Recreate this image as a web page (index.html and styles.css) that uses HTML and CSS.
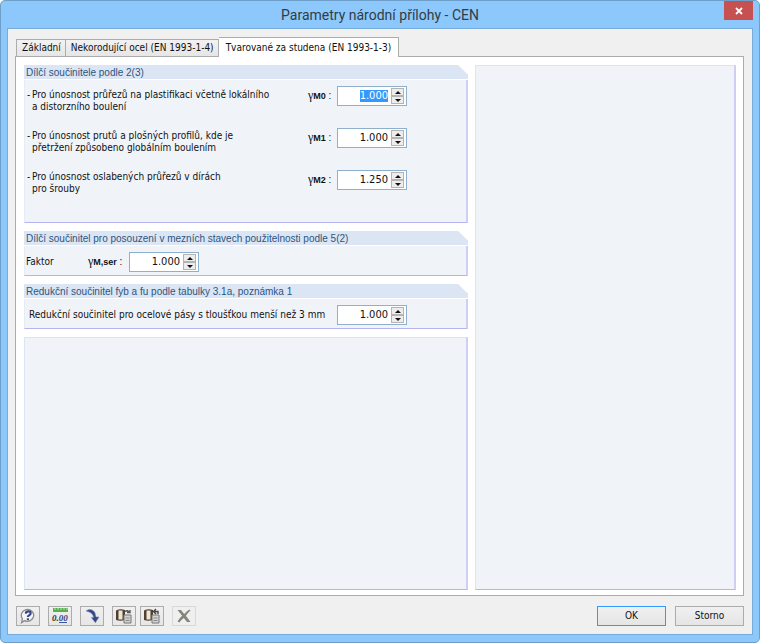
FILE: index.html
```html
<!DOCTYPE html>
<html lang="cs">
<head>
<meta charset="utf-8">
<title>Parametry národní přílohy - CEN</title>
<link rel="stylesheet" href="styles.css">
</head>
<body>
<main class="window">
  <header class="titlebar">
    <h1 class="title">Parametry národní přílohy - CEN</h1>
    <button class="close" type="button" aria-label="Zavřít">
      <svg width="8" height="8" viewBox="0 0 8 8"><path d="M1 1l6 6M7 1l-6 6" stroke="#fff" stroke-width="1.8"/></svg>
    </button>
  </header>
  <form class="client">
    <div class="tabs" role="tablist">
      <button class="tab" type="button" role="tab">Základní</button>
      <button class="tab" type="button" role="tab">Nekorodující ocel (EN 1993-1-4)</button>
      <button class="tab tab-active" type="button" role="tab" aria-selected="true">Tvarované za studena (EN 1993-1-3)</button>
    </div>
    <div class="page" role="tabpanel">
      <div class="column">
        <section class="group group-tall">
          <h2 class="group-title">Dílčí součinitele podle 2(3)</h2>
          <div class="factors">
            <div class="notes">
              <p class="note">Pro únosnost průřezů na plastifikaci včetně lokálního<br>a distorzního boulení</p>
              <p class="note">Pro únosnost prutů a plošných profilů, kde je<br>přetržení způsobeno globálním boulením</p>
              <p class="note">Pro únosnost oslabených průřezů v dírách<br>pro šrouby</p>
            </div>
            <div class="fields">
              <div class="field"><label class="symbol" for="m0"><span class="gamma">γ</span><b>M0</b> :</label>
                <span class="spin"><input id="m0" type="text" value="1.000"><span class="arrows"><button type="button" class="arrow up" aria-label="Zvýšit"></button><button type="button" class="arrow down" aria-label="Snížit"></button></span></span></div>
              <div class="field"><label class="symbol" for="m1"><span class="gamma">γ</span><b>M1</b> :</label>
                <span class="spin"><input id="m1" type="text" value="1.000"><span class="arrows"><button type="button" class="arrow up" aria-label="Zvýšit"></button><button type="button" class="arrow down" aria-label="Snížit"></button></span></span></div>
              <div class="field"><label class="symbol" for="m2"><span class="gamma">γ</span><b>M2</b> :</label>
                <span class="spin"><input id="m2" type="text" value="1.250"><span class="arrows"><button type="button" class="arrow up" aria-label="Zvýšit"></button><button type="button" class="arrow down" aria-label="Snížit"></button></span></span></div>
            </div>
          </div>
        </section>
        <section class="group">
          <h2 class="group-title">Dílčí součinitel pro posouzení v mezních stavech použitelnosti podle 5(2)</h2>
          <div class="line">
            <span class="factor-name">Faktor</span>
            <label class="symbol symbol-ser" for="mser"><span class="gamma">γ</span><b>M,ser</b> :</label>
            <span class="spin"><input id="mser" type="text" value="1.000"><span class="arrows"><button type="button" class="arrow up" aria-label="Zvýšit"></button><button type="button" class="arrow down" aria-label="Snížit"></button></span></span>
          </div>
        </section>
        <section class="group">
          <h2 class="group-title">Redukční součinitel fyb a fu podle tabulky 3.1a, poznámka 1</h2>
          <div class="line">
            <label class="reduction" for="red">Redukční součinitel pro ocelové pásy s tloušťkou menší než 3 mm</label>
            <span class="spin"><input id="red" type="text" value="1.000"><span class="arrows"><button type="button" class="arrow up" aria-label="Zvýšit"></button><button type="button" class="arrow down" aria-label="Snížit"></button></span></span>
          </div>
        </section>
        <section class="blank"></section>
      </div>
      <aside class="blank side"></aside>
    </div>
    <footer class="footer">
      <div class="tools">
        <button class="tool" type="button" aria-label="Nápověda">
          <svg width="18" height="16" viewBox="0 0 18 16"><path d="M5.5 12.6L2.6 14.6 3.4 10.8A6.2 5.9 0 1 1 5.5 12.6Z" fill="#f4f5fa" stroke="#8b8b8b" stroke-width="1.3"/><path d="M6.8 5.7Q7 3.4 9.4 3.4T11.6 5.4Q11.6 6.5 10 7.4Q9 8 8.9 9" fill="none" stroke="#34477f" stroke-width="2.2"/><path d="M7.8 10.3h2.200v1.900h-2.200z" fill="#34477f"/></svg>
        </button>
        <button class="tool" type="button" aria-label="Jednotky">
          <svg width="18" height="16" viewBox="0 0 18 16"><path d="M2 0h15v4H2z" fill="#55b04d"/><path d="M4 0v2M7 0v2M10 0v2M13 0v2M16 0v2" stroke="#b5e2ac"/><path d="M8 14.500h8" stroke="#4355a0"/><text x="1" y="13" font-family="Liberation Serif, serif" font-size="9" font-weight="bold" font-style="italic" fill="#333">0.<tspan fill="#34477f">00</tspan></text></svg>
        </button>
        <button class="tool" type="button" aria-label="Převzít">
          <svg width="18" height="16" viewBox="0 0 18 16"><path d="M3 3Q8-.5 11.800 4.200L13 9h3l-3.600 5.700L8.300 9.500h2.300Q10 4.400 3 3Z" fill="#34477f" stroke="#7c89b3" stroke-width=".6"/></svg>
        </button>
        <div class="pair">
          <button class="tool" type="button" aria-label="Načíst">
            <svg width="18" height="16" viewBox="0 0 18 16"><path d="M1 2.500Q5 .5 10 2v10Q5 13.500 1 12Z" fill="#4f4032"/><path d="M3.500 2.500h4v9h-4z" fill="#efe5d6"/><path d="M10 3.500q3-2 4 1M12 4.500h3V2" fill="none" stroke="#555" stroke-width="1.400"/><path d="M9 7h7v8H9z" fill="#d4d4d4" stroke="#777"/><path d="M10.500 10h4M10.500 12.500h4" stroke="#888"/></svg>
          </button>
          <button class="tool" type="button" aria-label="Uložit">
            <svg width="18" height="16" viewBox="0 0 18 16"><path d="M1 2.500Q5 .5 10 2v10Q5 13.500 1 12Z" fill="#4f4032"/><path d="M3.500 2.500h4v9h-4z" fill="#efe5d6"/><path d="M15 6V3.500h-4M13 1l-2.500 2.500L13 6" fill="none" stroke="#444" stroke-width="1.400"/><path d="M9 7h7v8H9z" fill="#d4d4d4" stroke="#777"/><path d="M10.500 10h4M10.500 12.500h4" stroke="#888"/></svg>
          </button>
        </div>
        <button class="tool tool-off" type="button" aria-label="Smazat" disabled>
          <svg width="18" height="16" viewBox="0 0 18 16"><path d="M2.500 2h3.500l3.200 4Q11.500 3 14.500 1.500l1 1Q12.500 5 10.900 7.800L15.500 14h-3.500l-3.200-4Q6 12 4.300 14.500L2.500 13.500Q4.500 10 7.100 7.800Z" fill="#85857c"/></svg>
        </button>
      </div>
      <div class="actions">
        <button class="action action-default" type="button">OK</button>
        <button class="action" type="button">Storno</button>
      </div>
    </footer>
  </form>
</main>
<script src="select.js"></script>
</body>
</html>
```
FILE: select.js
```js
const first = document.getElementById("m0");
first.focus();
first.select();
```
FILE: styles.css
```css
* { box-sizing: border-box; }
body {
  margin: 0;
  background: #fff;
  color: #111;
  font: 10px/12px "DejaVu Sans Condensed", "DejaVu Sans", sans-serif;
}
button, input { font: inherit; color: inherit; margin: 0; padding: 0; }
.window {
  min-height: 100vh;
  display: flex;
  flex-direction: column;
  padding: 0 6px 7px;
  background: #8dc8fc;
  border: 1px solid #6e9fca;
  border-radius: 5px;
}
.titlebar {
  display: grid;
  grid-template-columns: 29px 1fr 29px;
  height: 27px;
}
.title {
  grid-column: 2;
  margin: 0;
  text-align: center;
  font: 14px/28px Roboto, "Open Sans", sans-serif;
  color: #333c46;
}
.close {
  height: 19px;
  border: 0;
  background: #c75050;
  display: grid;
  place-items: center;
}
.client {
  flex: 1;
  display: flex;
  flex-direction: column;
  padding: 8px 8px 8px 7px;
  background: #f0f0f0;
  border: 1px solid #76abd9;
}
.tabs {
  display: flex;
  align-items: flex-end;
  padding-left: 1px;
}
.tab {
  height: 17px;
  padding: 0 4px 0 5px;
  border: 1px solid #acacac;
  border-bottom: 0;
  background: linear-gradient(#f2f2f2, #e6e6e6);
  white-space: nowrap;
}
.tab + .tab { border-left: 0; }
.tab-active {
  position: relative;
  height: 20px;
  padding: 0 7px;
  margin-bottom: -1px;
  background: #fff;
}
.page {
  flex: 1;
  display: grid;
  grid-template-columns: 444fr 261fr;
  gap: 7px;
  padding: 8px 7px 5px 8px;
  background: #fff;
  border: 1px solid #acacac;
}
.column { display: flex; flex-direction: column; gap: 8px; }
.group, .blank {
  background: #f0f4f9;
  border: 1px solid #dce5f4;
  border-right: 2px solid #cfcff6;
  border-bottom: 1px solid #b4b4f2;
}
.group {
  border-top: 0;
  border-left-color: #e6ecf6;
  min-height: 45px;
  clip-path: polygon(0 0, calc(100% - 10px) 0, 100% 10px, 100% 100%, 0 100%);
}
.group-tall { min-height: 158px; }
.column .blank { flex: 1; }
.group-title {
  margin: 0 -2px 0 -1px;
  padding-left: 2px;
  height: 15px;
  font: 10px/15px "Liberation Sans", sans-serif;
  color: #2b5580;
  background: #dce5f4;
  border-bottom: 1px solid #fff;
  white-space: nowrap;
}
.factors { display: flex; padding-top: 6px; }
.notes {
  width: 283px;
  display: flex;
  flex-direction: column;
  gap: 17px;
  padding: 3px 0 0 7px;
}
.note { margin: 0; white-space: nowrap; position: relative; }
.note::before { content: "-"; position: absolute; left: -5px; }
.fields { display: flex; flex-direction: column; gap: 22px; }
.field { display: flex; align-items: center; }
.symbol {
  width: 29px;
  font: 10px/20px "Liberation Sans", sans-serif;
  white-space: nowrap;
}
.symbol b { font-size: 9px; }
.gamma { font: 12px "Liberation Serif", serif; }
.spin {
  flex: none;
  display: flex;
  width: 70px;
  height: 20px;
  background: #fff;
  border: 1px solid #8fb0cd;
}
.spin input {
  width: 53px;
  padding-right: 3px;
  border: 0;
  outline: 0;
  background: none;
  font-size: 11px;
  text-align: right;
}
.spin input::selection { background: #3399ff; color: #fff; }
.arrows {
  display: grid;
  grid-template-rows: 1fr 1fr;
  width: 13px;
  padding: 1px 0;
}
.arrow {
  display: grid;
  place-items: center;
  border: 1px solid #b4b4b4;
  background: #ededed;
}
.arrow::before { content: ""; border: 3px solid transparent; }
.up::before { border-top: 0; border-bottom-color: #111; }
.down::before { border-bottom: 0; border-top-color: #111; }
.line { display: flex; align-items: center; padding: 6px 0 0 1px; }
.factor-name { width: 62px; }
.symbol-ser { width: 41px; }
.reduction { width: 311px; padding-left: 3px; white-space: nowrap; }
.footer {
  display: flex;
  justify-content: space-between;
  align-items: center;
  padding: 10px 0 0 1px;
}
.tools { display: flex; gap: 8px; }
.pair { display: flex; gap: 4px; }
.tool {
  width: 24px;
  height: 20px;
  display: grid;
  place-items: center;
  border: 1px solid #acacac;
  background: linear-gradient(#f0f0f0, #e6e6e6);
}
.tool-off { border-color: #d9d9d9; background: #efefef; }
.actions { display: flex; gap: 9px; }
.action {
  width: 69px;
  height: 20px;
  border: 1px solid #acacac;
  background: linear-gradient(#f0f0f0, #e5e5e5);
}
.action-default { border-color: #3399ff; }
```
